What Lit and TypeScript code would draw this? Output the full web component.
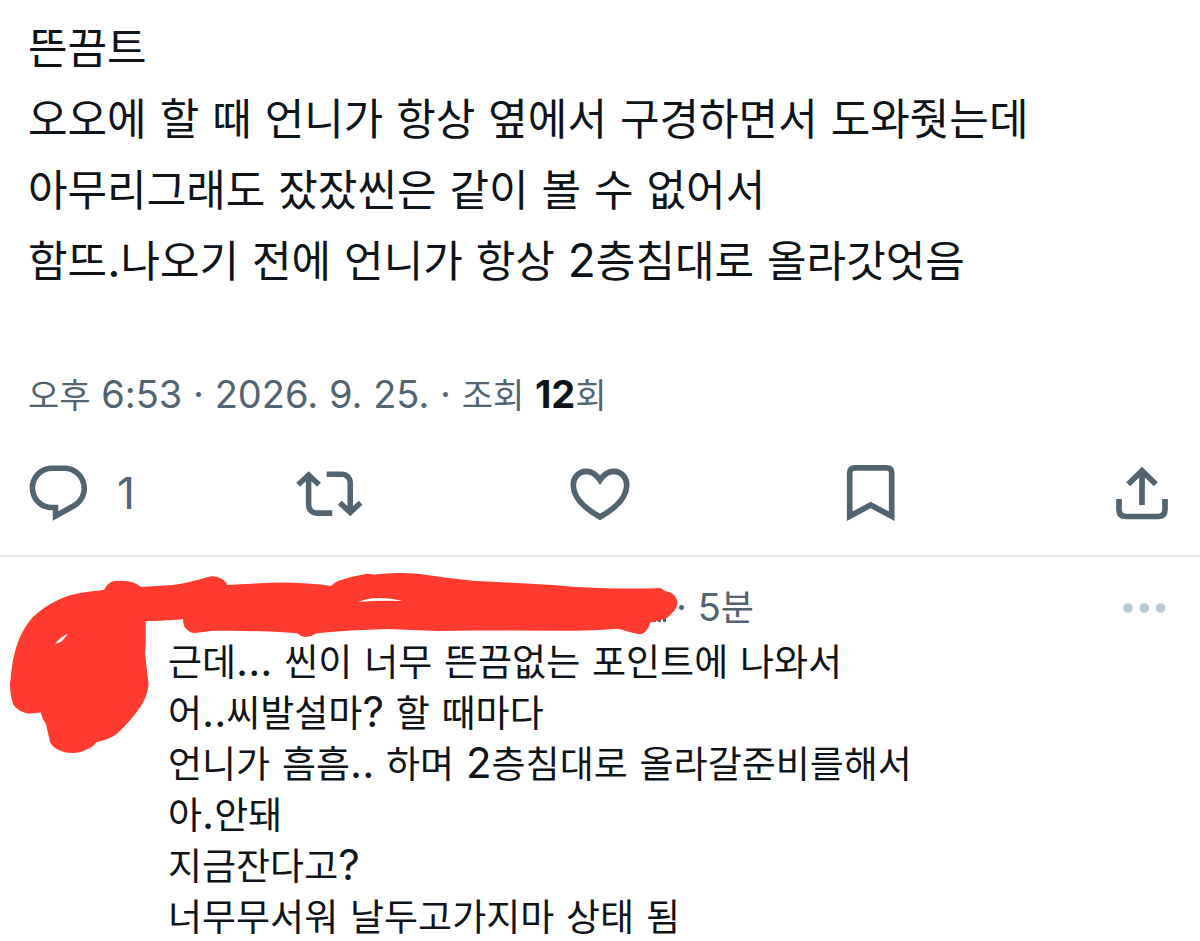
import { LitElement, html, css, svg } from "lit";
import { customElement } from "lit/decorators.js";

const POST = [
  "뜬끔트",
  "오오에 할 때 언니가 항상 옆에서 구경하면서 도와줫는데",
  "아무리그래도 잤잤씬은 같이 볼 수 없어서",
  "함뜨.나오기 전에 언니가 항상 2층침대로 올라갓엇음",
];

const REPLY = [
  "근데... 씬이 너무 뜬끔없는 포인트에 나와서",
  "어..씨발설마? 할 때마다",
  "언니가 흠흠.. 하며 2층침대로 올라갈준비를해서",
  "아.안돼",
  "지금잔다고?",
  "너무무서워 날두고가지마 상태 됨",
];

/* Hangul and Latin runs use separate optical sizes. */
const mixed = (text: string) =>
  text
    .split(/([^\uac00-\ud7a3]+)/)
    .filter((run) => run)
    .map((run) => (/[\uac00-\ud7a3]/.test(run) ? run : html`<span class="latin">${run}</span>`));

const line = (text: string) => html`<span class="line">${mixed(text)}</span>`;

const ACTIONS = [
  {
    label: "답글",
    count: "1",
    box: "-0.25 -0.3 24.25 24.25",
    art: svg`<path fill="currentColor" d="M1.751 10c0-4.42 3.584-8 8.005-8h4.366c4.49 0 8.129 3.64 8.129 8.13 0 2.96-1.607 5.68-4.196 7.11l-8.054 4.46v-3.69h-.067c-4.49.1-8.183-3.51-8.183-8.01zm8.005-6c-3.317 0-6.005 2.69-6.005 6 0 3.37 2.77 6.08 6.138 6.01l.351-.01h1.761v2.3l5.087-2.81c1.951-1.08 3.163-3.13 3.163-5.36 0-3.39-2.744-6.13-6.129-6.13H9.756z"/>`,
  },
  {
    label: "재게시",
    count: "",
    box: "-0.4 -0.5 24.5 24.5",
    art: svg`<path fill="currentColor" d="M4.5 3.88l4.432 4.14-1.364 1.46L5.5 7.55V16c0 1.1.896 2 2 2H13v2H7.5c-2.209 0-4-1.79-4-4V7.55L1.432 9.48.068 8.02 4.5 3.88zM16.5 6H11V4h5.5c2.209 0 4 1.79 4 4v8.45l2.068-1.93 1.364 1.46-4.432 4.14-4.432-4.14 1.364-1.46 2.068 1.93V8c0-1.1-.896-2-2-2z"/>`,
  },
  {
    label: "마음에 들어요",
    count: "",
    box: "0 0 68 68",
    art: svg`<path class="stroke" d="M34 21C30 15 25 12.3 20 12.3C13 12.3 7.3 18.2 7.3 26C7.3 37.5 18 49 34 58C50 49 60.7 37.5 60.7 26C60.7 18.2 55 12.3 48 12.3C43 12.3 38 15 34 21Z"/>`,
  },
  {
    label: "북마크",
    count: "",
    box: "0 0 68 68",
    art: svg`<path class="stroke" d="M12.7 57.2V13.8Q12.7 8.8 17.7 8.8H49.7Q54.7 8.8 54.7 13.8V57.2L33.7 46Z"/>`,
  },
  {
    label: "공유하기",
    count: "",
    box: "0 0 68 68",
    art: svg`<path class="stroke" d="M34 46V12M20.2 25.2L34 11.8L47.8 25.2M11 40V50.5Q11 57.5 18 57.5H50Q57 57.5 57 50.5V40"/>`,
  },
];

@customElement("app-root")
export class AppRoot extends LitElement {
  static styles = css`
    :host {
      display: block;
      max-height: 100vh;
      overflow: hidden;
      background: #fff;
      color: #0f1419;
      font-family: Inter, "Noto Sans CJK KR", sans-serif;
    }
    p {
      margin: 0;
    }
    .line {
      display: block;
      white-space: nowrap;
    }
    .latin {
      font-size: var(--latin);
      line-height: 1;
      white-space: pre;
    }
    .post {
      padding-top: 13px;
      border-bottom: 2px solid #e3e6e8;
    }
    .post-text {
      --latin: 46px;
      padding: 0 28px;
      font-size: 43px;
      line-height: 71px;
    }
    .post-text .line {
      height: 71px;
    }
    .meta {
      --latin: 38px;
      padding: 0 28px;
      margin-top: 74px;
      font-size: 34px;
      line-height: 50px;
      height: 50px;
      color: #536471;
      white-space: nowrap;
    }
    .meta strong {
      font-weight: 700;
      font-size: var(--latin);
      line-height: 1;
      color: #0f1419;
    }
    .actions {
      display: flex;
      justify-content: space-between;
      padding: 0 24px;
      margin: 38px 0 28px;
    }
    .action {
      display: flex;
      align-items: center;
      gap: 25px;
      width: 68px;
      height: 68px;
      padding: 0;
      border: 0;
      background: none;
      color: #536471;
      font: 400 44px Inter, sans-serif;
    }
    .action svg {
      flex: none;
      width: 68px;
      height: 68px;
    }
    .stroke {
      fill: none;
      stroke: currentColor;
      stroke-width: 5.7;
    }
    .reply {
      --latin: 42px;
      position: relative;
      padding: 26px 28px 0 168px;
      font-size: 37px;
      line-height: 51px;
    }
    .reply .line {
      height: 51px;
    }
    .reply-head {
      --latin: 38px;
      display: flex;
      align-items: center;
      height: 51px;
      margin-bottom: 3px;
      font-size: 36px;
      color: #536471;
    }
    .name {
      width: 508px;
    }
    .more {
      display: flex;
      margin-left: auto;
      padding: 0;
      border: 0;
      background: none;
      color: #b9c8d1;
    }
    .scribble {
      position: absolute;
      left: 0;
      top: 3px;
      width: 700px;
      height: 200px;
      pointer-events: none;
    }
  `;

  render() {
    return html`
      <article class="post">
        <p class="post-text">${POST.map(line)}</p>
        <p class="meta">
          ${mixed("오후 6:53 · 2026. 9. 25. · 조회 ")}<strong>12</strong>회
        </p>
        <div class="actions">
          ${ACTIONS.map(
            (a) => html`<button class="action" type="button" aria-label=${a.label}>
              <svg viewBox=${a.box}>${a.art}</svg>${a.count ? html`<span>${a.count}</span>` : ""}
            </button>`
          )}
        </div>
      </article>
      <article class="reply">
        <header class="reply-head">
          <span class="name"></span>
          <time>${mixed("· 5분")}</time>
          <button class="more" type="button" aria-label="더 보기">
            <svg width="50" height="16" viewBox="0 0 50 16" fill="currentColor">
              <circle cx="6" cy="7" r="4.8" />
              <circle cx="22.3" cy="7" r="4.8" />
              <circle cx="38.6" cy="7" r="4.8" />
            </svg>
          </button>
        </header>
        <p>${REPLY.map(line)}</p>
        <svg class="scribble" viewBox="0 560 700 200" aria-hidden="true">
          <path fill="#536471" d="M651 618h5v4h-5zM658 617h3v5h-3zM663 614h3v8h-3z" />
          <path
            fill="#ff3b30"
            d="M10 684Q11 672 13 660Q16 646 20 637Q25 626 32 618Q43 607 58 600Q68 595 80 593Q92 591 104 590Q107 583 114 581Q123 580 132 582Q138 584 141 587L173 585Q192 582 208 577Q214 575 220 578Q226 581 227 585Q256 583 285 582.500Q315 583 331 586Q335 582 338 581Q352 576 367 573.700Q374 575 380 574Q400 572 420 574Q446 578 473 580.700L553 585Q580 588 607 588.300Q640 589 660 588Q663 589 665 591Q671 592 674 595Q678 600 677.300 604Q676 610 672 613Q668 618 663 619.500Q658 621 650 622.700Q649 628 646.700 630Q643 635 638 634Q629 632 618 628.700Q592 631 567 630.700L480 630.500L437 631Q410 630 387 629Q350 630 317 633.300Q311 637 305 637Q300 636 297 633.300Q265 631 233 630.700H213L195 633Q190 633 187 629.500Q183 627 183 618.700Q180 620 176.700 619.700Q160 621 145.700 621.300V645L145 653L148.700 685Q147 696 141.700 705Q131 721 116.700 734Q108 740 96.700 742Q93 747 88 748.700Q80 753 73 753Q65 753 60 750.500Q53 748 50 742Q48 733 46 724Q42 719 40.700 712.500L28 713.700Q17 711 13 704Q10 695 10 684Z"
          />
          <path fill="#fff" d="M55 644Q60 637 67.700 634Q65 638 61 642Q58 643 55 644ZM358 602Q367 598 380 598Q392 598 402.700 601Q380 600 358 602Z" />
        </svg>
      </article>
    `;
  }
}
